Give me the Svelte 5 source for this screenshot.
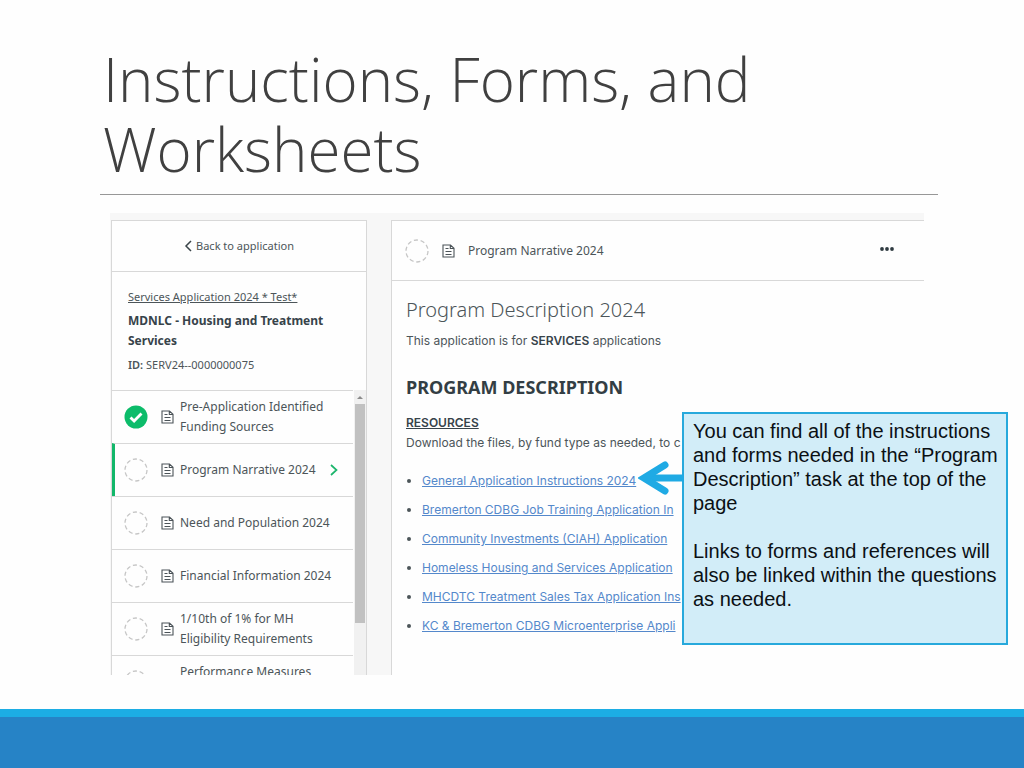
<script lang="ts">
  interface Task {
    label: string;
    done?: boolean;
    current?: boolean;
  }

  const tasks: Task[] = [
    { label: "Pre-Application Identified Funding Sources", done: true },
    { label: "Program Narrative 2024", current: true },
    { label: "Need and Population 2024" },
    { label: "Financial Information 2024" },
    { label: "1/10th of 1% for MH Eligibility Requirements" },
    { label: "Performance Measures" },
  ];

  const resources = [
    "General Application Instructions 2024",
    "Bremerton CDBG Job Training Application In",
    "Community Investments (CIAH) Application",
    "Homeless Housing and Services Application",
    "MHCDTC Treatment Sales Tax Application Ins",
    "KC & Bremerton CDBG Microenterprise Appli",
  ];
</script>

{#snippet pending()}
  <svg class="status" viewBox="0 0 24 24" aria-hidden="true">
    <circle cx="12" cy="12" r="11" fill="none" stroke="#c6c6c6" stroke-width="1.3" stroke-dasharray="4.2 2.7" />
  </svg>
{/snippet}

{#snippet doc()}
  <svg class="doc" viewBox="0 0 13 14" aria-hidden="true">
    <path d="M1 1h7.5L12 4.3V13H1z M8.3 1v3.5H12" fill="none" stroke="#4b5358" stroke-width="1.1" />
    <path d="M3.5 4.5h3 M3.5 7.5h6 M3.5 10.5h6" fill="none" stroke="#4b5358" />
  </svg>
{/snippet}

<main class="slide">
  <h1>Instructions, Forms, and Worksheets</h1>

  <div class="stage">
    <div class="app">
      <aside class="sidebar">
        <button class="back">
          <svg viewBox="0 0 8 12" aria-hidden="true">
            <path d="M7 1 2 6l5 5" fill="none" stroke="#3a4449" stroke-width="1.5" />
          </svg>
          Back to application
        </button>
        <div class="info">
          <a href="#application">Services Application 2024 * Test*</a>
          <strong>MDNLC - Housing and Treatment Services</strong>
          <span><b>ID:</b> SERV24--0000000075</span>
        </div>
        <div class="task-area">
          <ul class="tasks">
            {#each tasks as task}
              <li class:current={task.current}>
                {#if task.done}
                  <svg class="status" viewBox="0 0 24 24" aria-hidden="true">
                    <circle cx="12" cy="12" r="11.5" fill="#0cbc6a" />
                    <path d="m6.5 12.5 3.6 3.6 7.4-7.6" fill="none" stroke="#fff" stroke-width="2.8" />
                  </svg>
                {:else}
                  {@render pending()}
                {/if}
                {@render doc()}
                <span class="label">{task.label}</span>
                {#if task.current}
                  <svg class="next" viewBox="0 0 8 12" aria-hidden="true">
                    <path d="m1 1 5.5 5L1 11" fill="none" stroke="#1cb56c" stroke-width="1.7" />
                  </svg>
                {/if}
              </li>
            {/each}
          </ul>
          <div class="scrollbar">
            <svg viewBox="0 0 12 14" aria-hidden="true"><path d="M3 9h6L6 6z" fill="#8b8b8b" /></svg>
            <div class="thumb"></div>
          </div>
        </div>
      </aside>

      <section class="content">
        <header>
          {@render pending()}
          {@render doc()}
          <span>Program Narrative 2024</span>
          <button class="more" aria-label="More options">
            <svg viewBox="0 0 14 4" fill="#2e3a40" aria-hidden="true">
              <circle cx="2" cy="2" r="1.9" />
              <circle cx="7" cy="2" r="1.9" />
              <circle cx="12" cy="2" r="1.9" />
            </svg>
          </button>
        </header>
        <div class="body">
          <h2>Program Description 2024</h2>
          <p>This application is for <b>SERVICES</b> applications</p>
          <h3>PROGRAM DESCRIPTION</h3>
          <h4>RESOURCES</h4>
          <p>Download the files, by fund type as needed, to c</p>
          <ul class="links">
            {#each resources as resource}
              <li><a href="#resource">{resource}</a></li>
            {/each}
          </ul>
        </div>
      </section>
    </div>

    <div class="callout">
      <svg class="arrow" viewBox="0 0 46 34" aria-hidden="true">
        <path d="M46 17H10" fill="none" stroke="#1faae4" stroke-width="7" />
        <path d="M27 4 6 17l21 13" fill="none" stroke="#1faae4" stroke-width="7" stroke-linecap="round" />
      </svg>
      <p>You can find all of the instructions and forms needed in the “Program Description” task at the top of the page</p>
      <p>Links to forms and references will also be linked within the questions as needed.</p>
    </div>
  </div>

  <footer></footer>
</main>

<style>
  :global(body) {
    margin: 0;
    background: #fefefe;
  }

  .slide {
    display: flex;
    flex-direction: column;
    height: 100vh;
    box-sizing: border-box;
    overflow: hidden;
    font: 12px/20px "Noto Sans", sans-serif;
    color: #4c5559;
  }

  h1 {
    margin: 0 86px 0 100px;
    padding: 44px 90px 10px 3px;
    border-bottom: 1px solid #979797;
    font: 300 60px/70px "Open Sans", sans-serif;
    color: #404040;
  }

  .stage {
    position: relative;
    flex: 1;
    min-height: 0;
    margin: 18px 100px 34px 110px;
  }

  .app {
    display: flex;
    gap: 24px;
    height: 100%;
    box-sizing: border-box;
    padding: 7px 0 0 1px;
    overflow: hidden;
    background: #f7f7f7;
  }

  .sidebar {
    display: flex;
    flex-direction: column;
    flex: 0 0 254px;
    border: 1px solid #d8d8d8;
    border-bottom: 0;
    background: #fefefe;
  }

  .back {
    display: flex;
    align-items: center;
    justify-content: center;
    gap: 4px;
    padding: 15px 0;
    border: 0;
    border-bottom: 1px solid #d8d8d8;
    background: none;
    font: 11px/20px "Noto Sans", sans-serif;
    color: #4c5559;
  }

  .back svg {
    width: 8px;
    height: 12px;
  }

  .info {
    display: flex;
    flex-direction: column;
    padding: 15px 16px;
    font-size: 11px;
  }

  .info a {
    color: inherit;
  }

  .info strong {
    margin: 4px 0;
    font-size: 12px;
    color: #37434a;
  }

  .info b {
    font-weight: 600;
  }

  .task-area {
    display: flex;
    flex: 1;
    min-height: 0;
  }

  .tasks {
    flex: 1;
    margin: 0;
    padding: 0;
    list-style: none;
    overflow: hidden;
  }

  .tasks li {
    display: flex;
    align-items: center;
    min-height: 52px;
    padding-left: 12px;
    border-top: 1px solid #d8d8d8;
  }

  .tasks .current {
    padding-left: 9px;
    border-left: 3px solid #12b76a;
  }

  .tasks .doc {
    margin: 0 6px 0 13px;
  }

  .label {
    max-width: 158px;
  }

  .tasks li:last-child .label {
    align-self: flex-start;
    padding-top: 6px;
  }

  .status {
    flex: none;
    width: 24px;
    height: 24px;
  }

  .doc {
    flex: none;
    width: 13px;
    height: 14px;
  }

  .next {
    width: 8px;
    height: 12px;
    margin-left: 14px;
  }

  .scrollbar {
    width: 12px;
    margin-left: 1px;
    background: #f1f1f1;
  }

  .scrollbar svg {
    display: block;
    height: 14px;
  }

  .thumb {
    height: 77%;
    margin: 0 1px;
    background: #c1c1c1;
  }

  .content {
    flex: 1;
    min-width: 0;
    border: 1px solid #d8d8d8;
    border-width: 1px 0 0 1px;
    background: #fefefe;
    white-space: nowrap;
    overflow: hidden;
  }

  header {
    display: flex;
    align-items: center;
    height: 59px;
    padding: 0 28px 0 13px;
    border-bottom: 1px solid #d8d8d8;
  }

  header .doc {
    margin: 0 13px;
  }

  .more {
    display: flex;
    margin-left: auto;
    padding: 2px 2px 6px;
    border: 0;
    background: none;
  }

  .more svg {
    width: 14px;
    height: 4px;
  }

  .body {
    padding: 17px 14px;
    font-family: Inter, "Noto Sans", sans-serif;
  }

  h2,
  h3,
  h4,
  p {
    margin: 0;
  }

  h2 {
    margin-bottom: 9px;
    font: 300 20px/24px "Noto Sans", sans-serif;
  }

  h3 {
    margin: 24px 0 14px;
    font: 700 18px/24px "Noto Sans", sans-serif;
    color: #333e44;
  }

  h4 {
    font-size: 12px;
    font-weight: 600;
    text-decoration: underline;
    color: #37434a;
  }

  .body b {
    font-weight: 600;
    color: #37434a;
  }

  .links {
    margin: 13px 0 0;
    padding-left: 16px;
  }

  .links li {
    line-height: 29px;
  }

  .links a {
    color: #5488cb;
  }

  .callout {
    position: absolute;
    top: 199px;
    right: -84px;
    width: 311px;
    padding: 5px 2px 32px 9px;
    border: 2px solid #27a9dc;
    background: #d2edf8;
    font: 20px/24px "Liberation Sans", sans-serif;
    color: #0b1014;
  }

  .callout p + p {
    margin-top: 24px;
  }

  .arrow {
    position: absolute;
    top: 47px;
    left: -46px;
    width: 46px;
    height: 34px;
  }

  footer {
    height: 51px;
    border-top: 8px solid #1cade4;
    background: #2683c6;
  }
</style>
